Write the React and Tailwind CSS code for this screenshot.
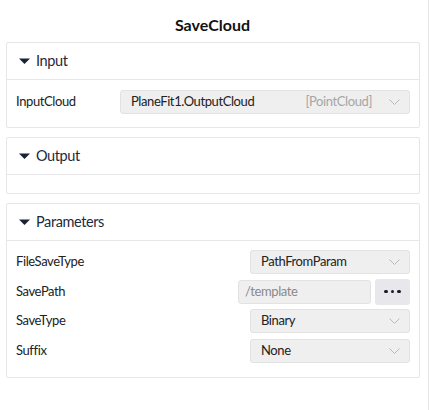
const font = { fontFamily: "Lato, 'Liberation Sans', sans-serif" };

const Caret = () => (
	<svg width="11" height="6" viewBox="0 0 11 6" className="mr-[6px]">
		<path d="M0 0.5 L11 0.5 L5.5 6 Z" fill="#1b2233" />
	</svg>
);

// thin chevron used by the dropdowns
const Chevron = () => (
	<svg width="11" height="6" viewBox="0 0 11 6">
		<path d="M0.5 0.5 L5.5 5.5 L10.5 0.5" fill="none" stroke="#b8b8bc" strokeWidth="1" />
	</svg>
);

const Section = ({ title, children, bodyClass }) => (
	<div className="w-[414px] border border-[#e6e6e9] rounded-[2px] bg-white">
		<div className="h-[37px] flex items-center pl-[12px] border-b border-[#e6e6e9]">
			<Caret />
			<span className="text-[14.5px] tracking-[-0.4px] text-[#1e2940]">{title}</span>
		</div>
		<div className={bodyClass}>{children}</div>
	</div>
);

const Select = ({ value, hint, width }) => (
	<div
		className={`${width} h-[24px] flex items-center bg-[#efefef] border border-[#e2e2e2] rounded-[3px] pl-[10px] pr-[9px]`}
	>
		<span className="text-[13px] tracking-[-0.4px] text-[#222]">{value}</span>
		<span className="flex-1" />
		{hint && (
			<span className="text-[13px] tracking-[-0.4px] text-[#a6a6a6] mr-[17px]">{hint}</span>
		)}
		<Chevron />
	</div>
);

const Row = ({ label, children }) => (
	<div className="h-[24px] flex items-center justify-between">
		<span className="text-[13px] tracking-[-0.4px] text-[#222]">{label}</span>
		{children}
	</div>
);

export default function App() {
	return (
		<div className="w-[430px] h-[410px] bg-white" style={font}>
			<div className="w-[429px] h-full border-r border-[#e4e4e4] flex flex-col">
				<h1 className="text-[16px] font-bold text-[#111] text-center pt-[13px] h-[42px] pr-[3px]">
					SaveCloud
				</h1>
				<div className="flex flex-col gap-[9px] pl-[6px]">
					<Section title="Input" bodyClass="pt-[10px] pb-[13px] px-[9px]">
						<Row label="InputCloud">
							<Select
								width="w-[290px]"
								value="PlaneFit1.OutputCloud"
								hint="[PointCloud]"
							/>
						</Row>
					</Section>
					<Section title="Output" bodyClass="h-[18px]" />
					<Section
						title="Parameters"
						bodyClass="pt-[9px] pb-[14px] px-[9px] flex flex-col gap-[5.5px]"
					>
						<Row label="FileSaveType">
							<Select width="w-[160px]" value="PathFromParam" />
						</Row>
						<Row label="SavePath">
							<div className="flex items-center gap-[4px]">
								<div className="w-[133px] h-[24px] flex items-center bg-[#efefef] border border-[#e2e2e2] rounded-[3px] pl-[6px]">
									<span className="text-[13px] tracking-[-0.4px] text-[#8a8a8a]">/template</span>
								</div>
								<button className="w-[35px] h-[26px] bg-[#e7e7ec] rounded-[3px] flex items-center justify-center gap-[3px]">
									<span className="w-[3.5px] h-[3.5px] rounded-full bg-[#1a1a2a]" />
									<span className="w-[3.5px] h-[3.5px] rounded-full bg-[#1a1a2a]" />
									<span className="w-[3.5px] h-[3.5px] rounded-full bg-[#1a1a2a]" />
								</button>
							</div>
						</Row>
						<Row label="SaveType">
							<Select width="w-[160px]" value="Binary" />
						</Row>
						<Row label="Suffix">
							<Select width="w-[160px]" value="None" />
						</Row>
					</Section>
				</div>
			</div>
		</div>
	);
}
